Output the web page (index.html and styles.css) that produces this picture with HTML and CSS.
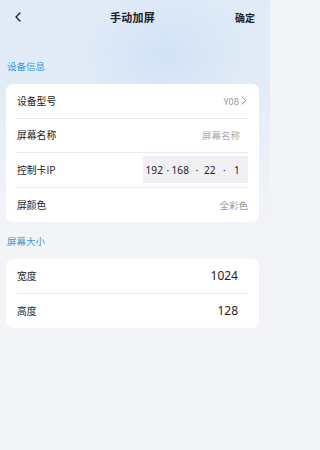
FILE: index.html
```html
<!DOCTYPE html>
<html lang="zh">
<head>
<meta charset="utf-8">
<link rel="stylesheet" href="styles.css">
</head>
<body>
<div class="page">
  <header class="nav">
    <svg class="back" width="8" height="10" viewBox="0 0 8 10"><path d="M6 1 L2 5 L6 9" fill="none" stroke="#222" stroke-width="1.4" stroke-linecap="round" stroke-linejoin="round"/></svg>
    <div class="title">手动加屏</div>
    <div class="ok">确定</div>
  </header>

  <div class="sec-title sec-first">设备信息</div>
  <div class="card">
    <div class="row">
      <span class="label">设备型号</span>
      <span class="value link">Y08<svg class="chev" width="6" height="9" viewBox="0 0 6 9"><path d="M1 0.8 L4.8 4.5 L1 8.2" fill="none" stroke="#888" stroke-width="1" stroke-linecap="round" stroke-linejoin="round"/></svg></span>
    </div>
    <div class="row">
      <span class="label">屏幕名称</span>
      <span class="value placeholder">屏幕名称</span>
    </div>
    <div class="row">
      <span class="label">控制卡IP</span>
      <div class="ip-box">
        <span class="seg seg1">192</span><span class="dot">·</span><span class="seg seg2">168</span><span class="dot">·</span><span class="seg seg3">22</span><span class="dot">·</span><span class="seg seg4">1</span>
      </div>
    </div>
    <div class="row">
      <span class="label">屏颜色</span>
      <span class="value plain">全彩色</span>
    </div>
  </div>

  <div class="sec-title sec-second">屏幕大小</div>
  <div class="card">
    <div class="row">
      <span class="label">宽度</span>
      <span class="num">1024</span>
    </div>
    <div class="row">
      <span class="label">高度</span>
      <span class="num">128</span>
    </div>
  </div>
</div>
</body>
</html>
```

FILE: styles.css
```css
* { box-sizing: border-box; }
html { background: #f3f4f8; }
html, body { margin: 0; padding: 0; }
body {
  width: 270px;
  height: 450px;
  overflow: hidden;
  font-family: "Noto Sans CJK SC", "Noto Sans", sans-serif;
  background: #f3f4f8;
}
.page {
  height: 450px;
  background:
    radial-gradient(ellipse 90px 70px at 165px 55px, rgba(208,225,246,0.9), rgba(208,225,246,0) 100%),
    linear-gradient(180deg, #e0ebf8 0px, #e2ecf7 90px, #edf1f7 170px, #f3f4f8 230px, #f3f4f8 100%);
}
.nav {
  height: 34px;
  display: flex;
  align-items: center;
  padding: 0 15px 0 14px;
}
.back { display: block; }
.title {
  flex: 1;
  text-align: center;
  font-size: 11px;
  font-weight: 700;
  color: #222;
  margin-left: 8px;
  letter-spacing: 0.2px;
}
.ok {
  font-size: 10px;
  font-weight: 700;
  color: #222;
}
.sec-title {
  font-size: 9.5px;
  line-height: 14px;
  color: #3a98dc;
  padding-left: 7px;
}
.sec-first { margin-top: 25px; margin-bottom: 11px; }
.sec-second { margin-top: 12px; margin-bottom: 11px; }
.card {
  margin-left: 6px;
  width: 253px;
  background: #fff;
  border-radius: 7px;
  padding: 0 11px;
}
.row {
  height: 34.5px;
  display: flex;
  align-items: center;
  justify-content: space-between;
  border-bottom: 1px solid #e4e9ef;
}
.row:last-child { border-bottom: none; }
.label {
  font-size: 9.8px;
  color: #222;
}
.value {
  font-size: 9.5px;
  color: #9a9a9a;
  display: flex;
  align-items: center;
}
.link { padding-right: 1px; }
.chev { margin-left: 2px; }
.placeholder { color: #aaaaaa; padding-right: 8px; }
.plain { color: #999; }
.ip-box {
  width: 105px;
  height: 27px;
  background: #f0f0f4;
  display: flex;
  align-items: center;
  font-size: 10px;
  color: #222;
  font-family: "Noto Sans", sans-serif;
  padding-left: 2.5px;
  letter-spacing: 0.1px;
}
.seg { display: inline-block; }
.seg1 { width: 20px; }
.seg2 { width: 24px; padding-left: 1px; }
.seg3 { width: 22.5px; padding-left: 4.5px; }
.seg4 { width: 15px; padding-left: 7px; }
.dot { display: inline-block; width: 5px; text-align: center; }
.num {
  font-family: "Noto Sans", sans-serif;
  font-size: 12px;
  color: #1e1e1e;
  padding-right: 10px;
}
```
